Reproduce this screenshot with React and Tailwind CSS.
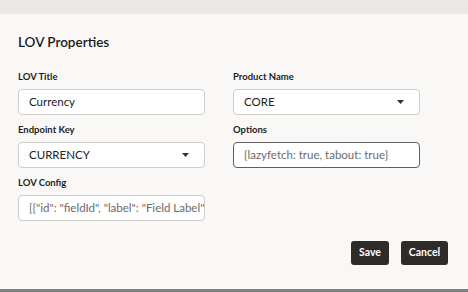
const font = { fontFamily: 'Lato, "Noto Sans", sans-serif' };

function Caret() {
  return (
    <svg width="7" height="4" viewBox="0 0 7 4" className="shrink-0">
      <path d="M0 0h7L3.5 4z" fill="#333" />
    </svg>
  );
}

function Field({ label, children }) {
  return (
    <div className="flex flex-col">
      <label className="text-[9.5px] leading-[12px] font-bold text-[#1f1f1f] mb-[6px]">{label}</label>
      {children}
    </div>
  );
}

function TextBox({ value, muted, focused }) {
  return (
    <div
      className={`h-[26px] rounded-[4px] bg-white flex items-center pl-[10px] text-[11.5px] overflow-hidden whitespace-nowrap ${
        focused ? 'border border-[#5f5f5f]' : 'border border-[#cfcdca]'
      } ${muted ? 'text-[#6b6b6b]' : 'text-[#222]'}`}
    >
      <span>{value}</span>
    </div>
  );
}

function SelectBox({ value }) {
  return (
    <div className="h-[26px] rounded-[4px] bg-white border border-[#cfcdca] flex items-center justify-between pl-[10px] pr-[15px] text-[11.5px] text-[#222]">
      <span>{value}</span>
      <Caret />
    </div>
  );
}

export default function App() {
  return (
    <div className="w-[468px] h-[292px] flex flex-col bg-[#ebebea]" style={font}>
      <div className="h-[14px] bg-[#e9e8e6]" />
      <div className="flex-1 bg-[#f9f8f6] pl-[18px] pr-[20px] pt-[19px]">
        <h2 className="text-[13.5px] leading-[18px] font-semibold text-[#1a1a1a]">LOV Properties</h2>

        <div className="grid grid-cols-[187px_187px] gap-x-[28px] gap-y-[9px] mt-[20px]">
          <Field label="LOV Title">
            <TextBox value="Currency" />
          </Field>
          <Field label="Product Name">
            <SelectBox value="CORE" />
          </Field>
          <Field label="Endpoint Key">
            <SelectBox value="CURRENCY" />
          </Field>
          <Field label="Options">
            <TextBox value="{lazyfetch: true, tabout: true}" muted focused />
          </Field>
          <Field label="LOV Config">
            <TextBox value={'[{"id": "fieldId", "label": "Field Label"'} muted />
          </Field>
        </div>

        <div className="flex justify-end gap-[12px] mt-[20px]">
          <button className="h-[24px] w-[38px] rounded-[3px] bg-[#2e2b28] text-white text-[10.5px] font-bold">Save</button>
          <button className="h-[24px] w-[47px] rounded-[3px] bg-[#2e2b28] text-white text-[10.5px] font-bold">Cancel</button>
        </div>
      </div>
      <div className="h-[3px] bg-[#808080]" />
    </div>
  );
}
